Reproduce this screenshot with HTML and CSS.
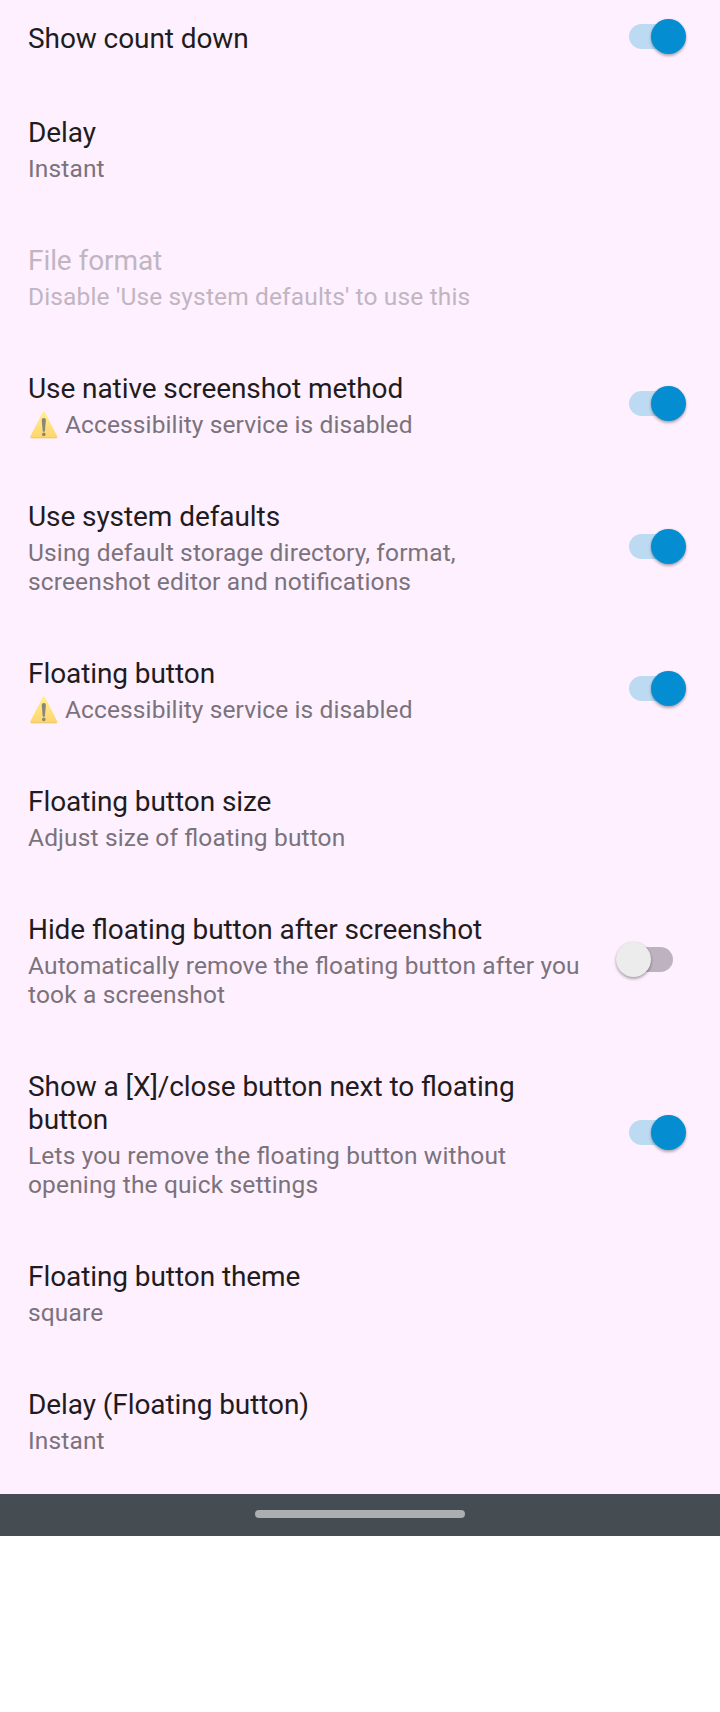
FILE: index.html
```html
<!DOCTYPE html>
<html lang="en">
<head>
<meta charset="utf-8">
<title>Settings</title>
<link rel="stylesheet" href="styles.css">
</head>
<body>
<svg class="defs" width="0" height="0" aria-hidden="true">
  <defs>
    <linearGradient id="warn" x1="0" y1="0" x2="0" y2="1">
      <stop offset="0" stop-color="#fff08f"/>
      <stop offset="1" stop-color="#fdd56c"/>
    </linearGradient>
    <symbol id="warning" viewBox="0 0 28 28">
      <path d="M12.7 1.2Q13.8-.5 14.9 1.2L27.2 25.3Q27.9 27.2 26.2 27.2H1.4Q-.3 27.2.4 25.3Z" fill="url(#warn)"/>
      <path d="M1 26.7H26.6" stroke="#edc873" stroke-width="1"/>
      <path d="M11.7 9Q11.7 7 13.8 7T15.9 9L14.9 20.3Q13.8 21.3 12.7 20.3Z" fill="#8c8579"/>
      <circle cx="13.8" cy="23.4" r="1.8" fill="#8c8579"/>
    </symbol>
  </defs>
</svg>
<main class="screen">
  <section class="row row-first">
    <div class="text"><div class="title">Show count down</div></div>
    <div class="switch on"><span class="thumb"></span></div>
  </section>
  <section class="row">
    <div class="text"><div class="title">Delay</div><div class="summary">Instant</div></div>
  </section>
  <section class="row disabled">
    <div class="text"><div class="title">File format</div><div class="summary">Disable 'Use system defaults' to use this</div></div>
  </section>
  <section class="row">
    <div class="text"><div class="title">Use native screenshot method</div><div class="summary warning"><svg class="icon"><use href="#warning"/></svg>Accessibility service is disabled</div></div>
    <div class="switch on"><span class="thumb"></span></div>
  </section>
  <section class="row">
    <div class="text"><div class="title">Use system defaults</div><div class="summary">Using default storage directory, format,<br>screenshot editor and notifications</div></div>
    <div class="switch on"><span class="thumb"></span></div>
  </section>
  <section class="row">
    <div class="text"><div class="title">Floating button</div><div class="summary warning"><svg class="icon"><use href="#warning"/></svg>Accessibility service is disabled</div></div>
    <div class="switch on"><span class="thumb"></span></div>
  </section>
  <section class="row">
    <div class="text"><div class="title">Floating button size</div><div class="summary">Adjust size of floating button</div></div>
  </section>
  <section class="row">
    <div class="text"><div class="title">Hide floating button after screenshot</div><div class="summary">Automatically remove the floating button after you<br>took a screenshot</div></div>
    <div class="switch off"><span class="thumb"></span></div>
  </section>
  <section class="row">
    <div class="text"><div class="title">Show a [X]/close button next to floating<br>button</div><div class="summary">Lets you remove the floating button without<br>opening the quick settings</div></div>
    <div class="switch on"><span class="thumb"></span></div>
  </section>
  <section class="row">
    <div class="text"><div class="title">Floating button theme</div><div class="summary">square</div></div>
  </section>
  <section class="row">
    <div class="text"><div class="title">Delay (Floating button)</div><div class="summary">Instant</div></div>
  </section>
</main>
<footer class="navbar"><div class="handle"></div></footer>
</body>
</html>
```
FILE: styles.css
```css
* { box-sizing: border-box; }
body {
  margin: 0;
  background: #fff;
  font-family: Roboto, sans-serif;
  font-feature-settings: "liga" 1;
}
.defs { display: block; height: 0; }
.screen {
  height: 1494px;
  background: #fef0ff;
  overflow: hidden;
}
.row {
  display: flex;
  align-items: center;
  justify-content: space-between;
  padding: 31px 39px 30px 28px;
}
.row-first { padding-top: 22px; }
.text { white-space: nowrap; }
.title {
  font-size: 28px;
  line-height: 33px;
  letter-spacing: -0.08px;
  color: #1f1c20;
}
.summary {
  margin-top: 5px;
  font-size: 24.5px;
  line-height: 29px;
  letter-spacing: 0.145px;
  color: #7a737b;
}
.disabled .title, .disabled .summary { color: #c0b5c1; }
.warning { display: flex; letter-spacing: 0.11px; }
.icon { width: 28px; height: 28px; margin: 1px 7px 0 2px; }
.switch {
  position: relative;
  flex: none;
  width: 52px;
  height: 25px;
  margin-bottom: 4px;
  border-radius: 12.5px;
}
.on { background: #bddaf3; }
.off { background: #bdb2bd; margin-right: 8px; }
.thumb {
  position: absolute;
  top: -5px;
  width: 35px;
  height: 35px;
  border-radius: 50%;
  box-shadow: 0 2px 3px rgba(0, 0, 0, .3), 0 0 2px rgba(0, 0, 0, .12);
}
.on .thumb { left: 22px; background: #048ed1; }
.off .thumb { left: -5px; background: #ececec; }
.navbar {
  display: flex;
  justify-content: center;
  height: 42px;
  padding-top: 16px;
  background: #464d52;
}
.handle {
  width: 210px;
  height: 8px;
  border-radius: 4px;
  background: #abafb2;
}
```
